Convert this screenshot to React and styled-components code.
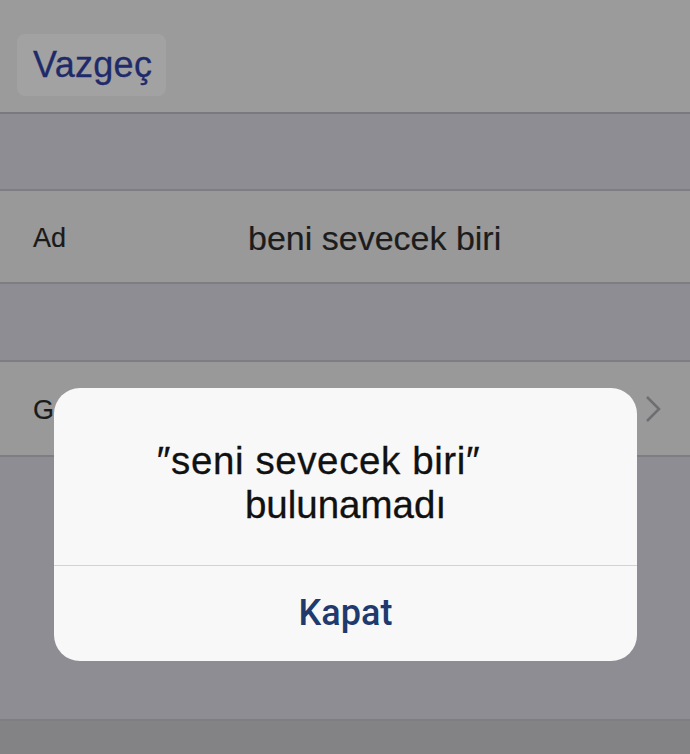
import React from 'react';
import styled, { createGlobalStyle } from 'styled-components';

const GlobalStyle = createGlobalStyle`
  html, body {
    margin: 0;
    padding: 0;
    background: #8e8d93;
    overflow: hidden;
  }
  body {
    font-family: "Liberation Sans", Arial, sans-serif;
  }
`;

const Screen = styled.div`
  position: relative;
  width: 690px;
  height: 754px;
  display: flex;
  flex-direction: column;
  background: #8e8d93;
  overflow: hidden;
`;

const NavBar = styled.div`
  height: 114px;
  padding: 34px 0 0 17px;
  box-sizing: border-box;
  background: #9b9b9b;
  border-bottom: 2px solid #7a7a7e;
  flex-shrink: 0;
`;

const CancelButton = styled.div`
  width: 149px;
  height: 62px;
  display: flex;
  align-items: center;
  padding-left: 16px;
  box-sizing: border-box;
  background: #a2a2a2;
  border-radius: 8px;
  font-size: 36px;
  color: #1f2a6a;
  letter-spacing: 0.3px;
  -webkit-text-stroke: 0.3px #1f2a6a;
`;

const Gap = styled.div`
  height: ${(p) => p.h}px;
  background: #8e8d93;
  border-bottom: 2px solid #7d7d82;
  flex-shrink: 0;
`;

const Row = styled.div`
  height: ${(p) => p.h}px;
  display: flex;
  align-items: center;
  padding: 4px 30px 0 33px;
  box-sizing: border-box;
  background: #999999;
  border-bottom: 2px solid #7d7d82;
  color: #1a1a1a;
  flex-shrink: 0;
`;

const Label = styled.span`
  width: 215px;
  font-size: 27px;
  -webkit-text-stroke: 0.2px #1a1a1a;
`;

const Value = styled.span`
  flex: 1;
  font-size: 34px;
  color: #1c1c1c;
  -webkit-text-stroke: 0.2px #1c1c1c;
`;

const Chevron = styled.svg`
  width: 18px;
  height: 28px;
  margin-left: auto;
  margin-right: -2px;
  margin-top: -4px;
`;

const Bottom = styled.div`
  flex: 1;
  background: #838285;
`;

const Alert = styled.div`
  position: absolute;
  left: 54px;
  top: 388px;
  width: 583px;
  height: 273px;
  background: #f8f8f8;
  border-radius: 26px;
  display: flex;
  flex-direction: column;
  overflow: hidden;
`;

const AlertBody = styled.div`
  height: 178px;
  display: flex;
  flex-direction: column;
  align-items: center;
  padding-top: 51px;
  box-sizing: border-box;
  border-bottom: 1.5px solid #d2d2d4;
`;

const TitleLine = styled.div`
  font-size: 38.5px;
  line-height: 44px;
  color: #111;
  letter-spacing: ${(p) => p.spacing || 0}px;
  margin-right: ${(p) => p.shift || 0}px;
  -webkit-text-stroke: 0.3px #111;
`;

const AlertButton = styled.div`
  flex: 1;
  display: flex;
  align-items: center;
  justify-content: center;
  font-family: Roboto, "Liberation Sans", sans-serif;
  font-weight: 500;
  font-size: 36px;
  color: #1e3a6e;
  padding-bottom: 2px;
`;

export default function App() {
  return (
    <>
      <GlobalStyle />
      <Screen>
        <NavBar>
          <CancelButton>Vazgeç</CancelButton>
        </NavBar>
        <Gap h={75} />
        <Row h={93}>
          <Label>Ad</Label>
          <Value>beni sevecek biri</Value>
        </Row>
        <Gap h={76} />
        <Row h={95}>
          <Label>G</Label>
          <Chevron viewBox="0 0 18 28">
            <path d="M3 2 L15 14 L3 26" fill="none" stroke="#6e6e72" strokeWidth="2.5" />
          </Chevron>
        </Row>
        <Gap h={262} />
        <Bottom />
        <Alert>
          <AlertBody>
            <TitleLine shift={54} spacing={0.6}>″seni sevecek biri″</TitleLine>
            <TitleLine>bulunamadı</TitleLine>
          </AlertBody>
          <AlertButton>Kapat</AlertButton>
        </Alert>
      </Screen>
    </>
  );
}
